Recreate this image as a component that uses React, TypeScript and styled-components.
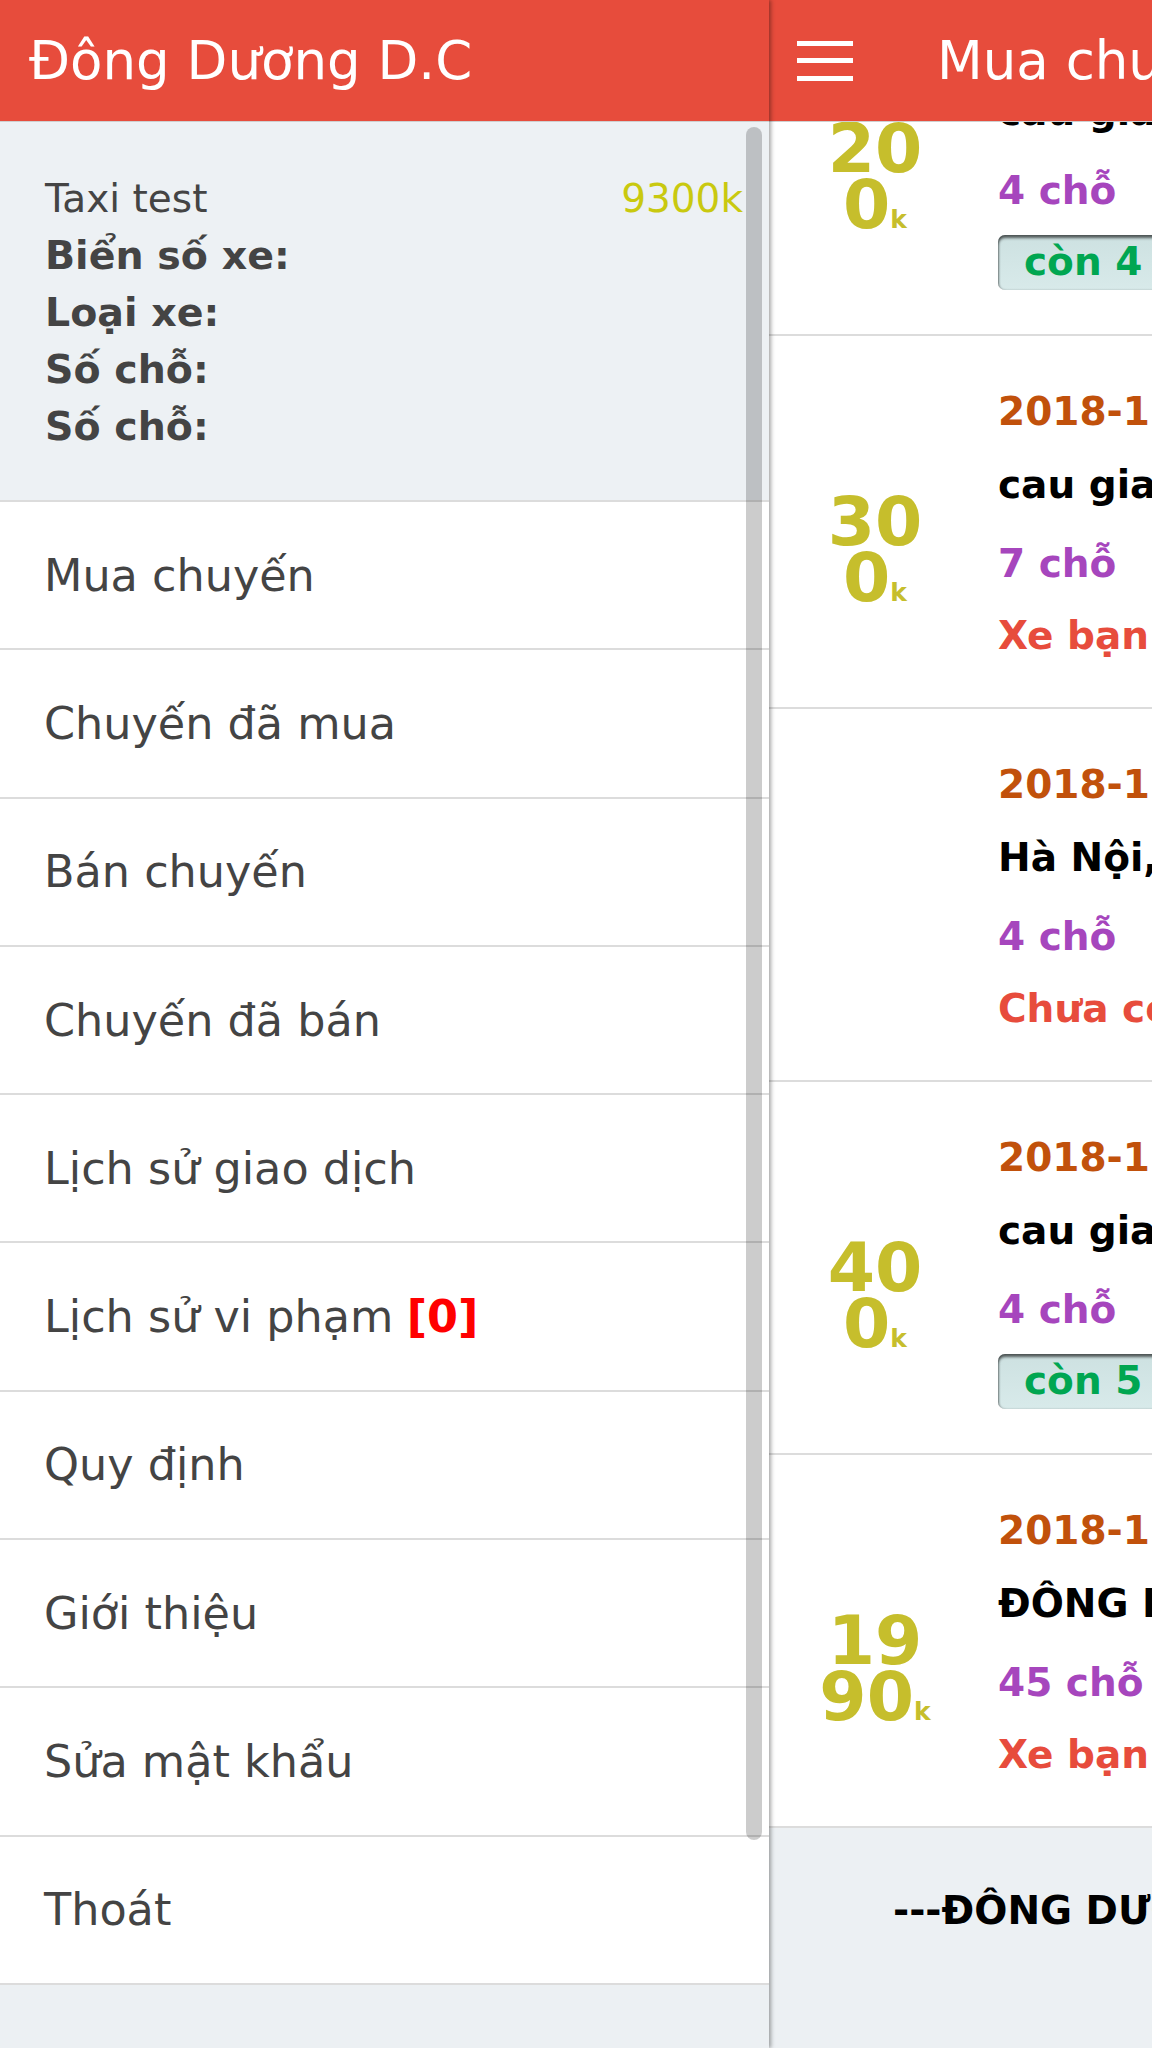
import React from 'react';
import styled, { createGlobalStyle } from 'styled-components';

const GlobalStyle = createGlobalStyle`
  html, body { margin: 0; padding: 0; background: #ecf0f3; }
  body { font-family: "DejaVu Sans", "Noto Sans", sans-serif; }
  * { box-sizing: border-box; }
`;

const Screen = styled.div`
  display: flex;
  width: 1152px;
  height: 2048px;
  overflow: hidden;
  font-family: "DejaVu Sans", "Noto Sans", sans-serif;
`;

const Drawer = styled.aside`
  position: relative;
  z-index: 2;
  flex: 0 0 769px;
  display: flex;
  flex-direction: column;
  background: #ecf0f3;
  box-shadow: 2px 0 4px rgba(0, 0, 0, 0.35);
`;

const AppBar = styled.header<{ $pad: number }>`
  flex: 0 0 122px;
  height: 122px;
  display: flex;
  align-items: center;
  padding-left: ${(p) => p.$pad}px;
  background: #e74c3c;
  border-bottom: 1px solid #cfcfcf;
  color: #fff;
  font-size: 53px;
  white-space: nowrap;
`;

const Profile = styled.section`
  flex: 0 0 380px;
  padding: 48px 26px 0 45px;
  background: #edf1f4;
  border-bottom: 2px solid #dcdcdc;
`;

const ProfileTop = styled.div`
  display: flex;
  justify-content: space-between;
  font-size: 39px;
  line-height: 57px;
  color: #444;
`;

const Balance = styled.span`
  color: #c9c90f;
`;

const InfoLine = styled.div`
  font-size: 39.5px;
  line-height: 57px;
  font-weight: bold;
  color: #444;
`;

const MenuItem = styled.div`
  flex: 0 0 148.3px;
  display: flex;
  align-items: center;
  padding-left: 44px;
  background: #fff;
  border-bottom: 2px solid #dcdcdc;
  font-size: 44.5px;
  color: #444;
  white-space: nowrap;
`;

const Count = styled.b`
  color: #ff0000;
  margin-left: 0.3em;
`;

const ScrollThumb = styled.div`
  position: absolute;
  left: 746px;
  top: 127px;
  width: 16px;
  height: 1713px;
  border-radius: 8px;
  background: rgba(0, 0, 0, 0.2);
`;

const Main = styled.main`
  flex: 0 0 1152px;
  display: flex;
  flex-direction: column;
  background: #ecf0f3;
`;

const Burger = styled.div`
  display: flex;
  flex-direction: column;
  gap: 12.5px;
  width: 56px;
  margin-right: 84px;
`;

const Bar = styled.span`
  display: block;
  height: 5px;
  background: #fff;
`;

const ListViewport = styled.div`
  flex: 1;
  overflow: hidden;
  display: flex;
  flex-direction: column;
`;

const TripList = styled.div`
  margin-top: -159px;
`;

const Trip = styled.div`
  display: flex;
  height: 373px;
  background: #fff;
  border-bottom: 2px solid #dcdcdc;
`;

const PriceCol = styled.div`
  flex: 0 0 212px;
  display: flex;
  justify-content: center;
  align-items: flex-start;
  padding-top: 158px;
`;

const Price = styled.div`
  width: 120px;
  text-align: center;
  word-break: break-all;
  font-size: 68px;
  line-height: 56px;
  font-weight: bold;
  color: #c6be2c;
`;

const Unit = styled.span`
  font-size: 25px;
  line-height: 1;
`;

const InfoCol = styled.div`
  margin-left: 17px;
  padding-top: 49px;
  display: flex;
  flex-direction: column;
  align-items: flex-start;
  white-space: nowrap;
  font-size: 39px;
  line-height: 53px;
  font-weight: bold;
`;

const DateLine = styled.div`
  color: #c1510b;
`;

const Route = styled.div`
  margin-top: 20px;
  color: #000;
`;

const Seats = styled.div`
  margin-top: 26px;
  color: #a646bd;
`;

const Status = styled.div`
  margin-top: 19px;
  color: #e74c3c;
`;

const Badge = styled.div`
  margin-top: 18px;
  height: 55px;
  line-height: 53px;
  padding: 0 26px;
  border-radius: 7px;
  color: #00a651;
  background: linear-gradient(#cde1e1, #d8eaea);
  box-shadow: inset 0 3px 3px rgba(0, 0, 0, 0.6), inset 1px 0 2px rgba(0, 0, 0, 0.25);
`;

const Footer = styled.footer`
  flex: 1;
  padding: 56px 0 0 124px;
  font-size: 39px;
  line-height: 53px;
  font-weight: bold;
  color: #000;
  white-space: nowrap;
  background: #ecf0f3;
`;

type TripData = {
  price: string | null;
  date: string;
  route: string;
  seats: string;
  status: { kind: 'badge' | 'text'; text: string };
};

const trips: TripData[] = [
  { price: '200', date: '2018-12-05 08:30', route: 'cau giay - noi bai', seats: '4 chỗ', status: { kind: 'badge', text: 'còn 4 chỗ' } },
  { price: '300', date: '2018-12-04 14:00', route: 'cau giay - ha dong', seats: '7 chỗ', status: { kind: 'text', text: 'Xe bạn đã mua' } },
  { price: null, date: '2018-12-03 07:00', route: 'Hà Nội, Việt Nam - Nội Bài', seats: '4 chỗ', status: { kind: 'text', text: 'Chưa có người mua' } },
  { price: '400', date: '2018-12-02 09:15', route: 'cau giay - noi bai', seats: '4 chỗ', status: { kind: 'badge', text: 'còn 5 chỗ' } },
  { price: '1990', date: '2018-12-01 06:00', route: 'ĐÔNG DƯƠNG D.C', seats: '45 chỗ', status: { kind: 'text', text: 'Xe bạn đã bán' } },
];

const menu = [
  'Mua chuyến',
  'Chuyến đã mua',
  'Bán chuyến',
  'Chuyến đã bán',
  'Lịch sử giao dịch',
  'Lịch sử vi phạm',
  'Quy định',
  'Giới thiệu',
  'Sửa mật khẩu',
  'Thoát',
];

export default function App() {
  return (
    <Screen>
      <GlobalStyle />
      <Drawer>
        <AppBar $pad={29}>Đông Dương D.C</AppBar>
        <Profile>
          <ProfileTop>
            <span>Taxi test</span>
            <Balance>9300k</Balance>
          </ProfileTop>
          <InfoLine>Biển số xe:</InfoLine>
          <InfoLine>Loại xe:</InfoLine>
          <InfoLine>Số chỗ:</InfoLine>
          <InfoLine>Số chỗ:</InfoLine>
        </Profile>
        {menu.map((m) => (
          <MenuItem key={m}>
            {m}
            {m === 'Lịch sử vi phạm' && <Count>[0]</Count>}
          </MenuItem>
        ))}
        <ScrollThumb />
      </Drawer>
      <Main>
        <AppBar $pad={28}>
          <Burger>
            <Bar />
            <Bar />
            <Bar />
          </Burger>
          Mua chuyến
        </AppBar>
        <ListViewport>
          <TripList>
            {trips.map((t, i) => (
              <Trip key={i}>
                <PriceCol>
                  {t.price && (
                    <Price>
                      {t.price}
                      <Unit>k</Unit>
                    </Price>
                  )}
                </PriceCol>
                <InfoCol>
                  <DateLine>{t.date}</DateLine>
                  <Route>{t.route}</Route>
                  <Seats>{t.seats}</Seats>
                  {t.status.kind === 'badge' ? (
                    <Badge>{t.status.text}</Badge>
                  ) : (
                    <Status>{t.status.text}</Status>
                  )}
                </InfoCol>
              </Trip>
            ))}
          </TripList>
          <Footer>---ĐÔNG DƯƠNG D.C---</Footer>
        </ListViewport>
      </Main>
    </Screen>
  );
}
